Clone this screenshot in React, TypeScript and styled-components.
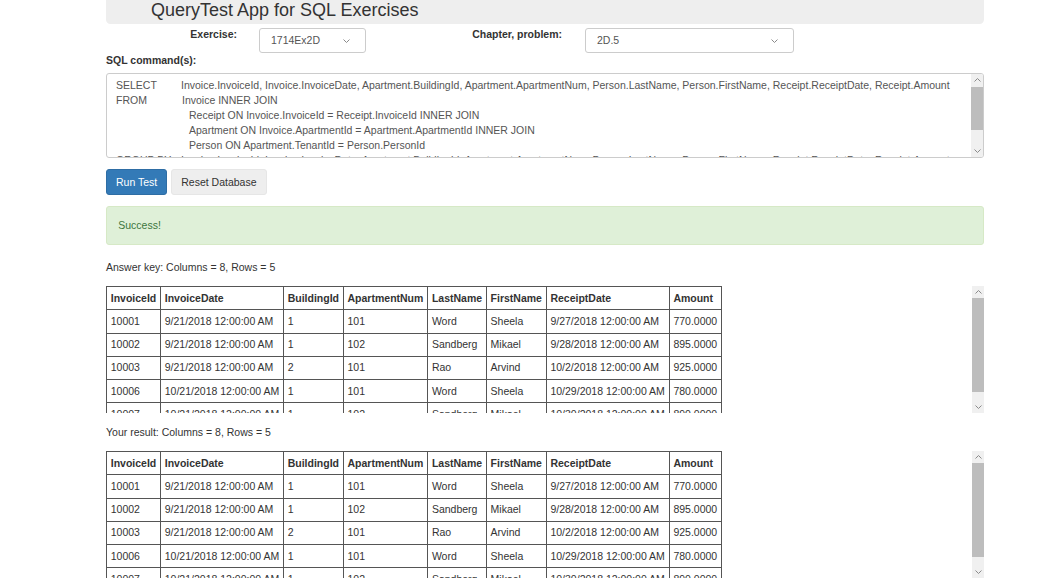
import React from "react";
import styled, { createGlobalStyle } from "styled-components";

const GlobalStyle = createGlobalStyle`
    html, body {
        margin: 0;
        padding: 0;
        background: #ffffff;
    }
    body {
        font-family: "Liberation Sans", Arial, sans-serif;
        font-size: 10.5px;
        line-height: 15px;
        color: #333333;
    }
`;

const Page = styled.main`
    width: 878px;
    margin-left: 106px;
`;

const Header = styled.header`
    background: #eeeeee;
    border-radius: 0 0 4.5px 4.5px;
    padding: 0 45px 4px;
`;

const Title = styled.h3`
    margin: 0;
    font-size: 18px;
    line-height: 20px;
    font-weight: normal;
    color: #333333;
`;

const FormRow = styled.div`
    display: flex;
    align-items: flex-start;
    margin-top: 3px;
`;

const Label = styled.label<{ $width: number }>`
    width: ${(p) => p.$width}px;
    text-align: right;
    font-weight: bold;
`;

const Select = styled.div<{ $width: number; $gap: number }>`
    width: ${(p) => p.$width}px;
    height: 25px;
    box-sizing: border-box;
    margin: 1px 0 0 ${(p) => p.$gap}px;
    padding: 0 15px 0 11px;
    border: 1px solid #cccccc;
    border-radius: 3px;
    display: flex;
    align-items: center;
    justify-content: space-between;
    color: #555555;
`;

const SectionLabel = styled.div`
    font-weight: bold;
`;

const TextBox = styled.div`
    margin-top: 4.5px;
    height: 85px;
    box-sizing: border-box;
    border: 1px solid #cccccc;
    border-radius: 3px;
    display: flex;
    overflow: hidden;
`;

const SqlText = styled.div`
    flex: 1;
    padding: 4.5px 9px;
    overflow: hidden;
    color: #555555;
    white-space: nowrap;
`;

const SqlLine = styled.div`
    display: flex;
`;

const Keyword = styled.span`
    width: 65px;
    flex: none;
`;

const Indent = styled.span<{ $width: number }>`
    width: ${(p) => p.$width}px;
    flex: none;
`;

const Bar = styled.div`
    width: 12px;
    flex: none;
    display: flex;
    flex-direction: column;
    background: #f0f0f0;
`;

const Arrow = styled.div`
    height: 12px;
    display: flex;
    align-items: center;
    justify-content: center;
    flex: none;
`;

const Track = styled.div`
    flex: 1;
`;

const Thumb = styled.div`
    background: #bdbdbd;
`;

const ButtonRow = styled.div`
    display: flex;
    gap: 4px;
    margin-top: 11px;
`;

const Button = styled.button<{ $primary?: boolean }>`
    height: 26px;
    padding: 0 9px;
    font-family: inherit;
    font-size: 10.5px;
    border-radius: 3px;
    border: 1px solid ${(p) => (p.$primary ? "#2e6da4" : "#e6e6e6")};
    background: ${(p) => (p.$primary ? "#337ab7" : "#eeeeee")};
    color: ${(p) => (p.$primary ? "#ffffff" : "#333333")};
`;

const Alert = styled.div`
    margin-top: 11px;
    padding: 11px 11.25px;
    border: 1px solid #d6e9c6;
    border-radius: 3px;
    background: #dff0d8;
    color: #3c763d;
`;

const Caption = styled.div<{ $top: number }>`
    margin-top: ${(p) => p.$top}px;
`;

const TableWrap = styled.div`
    margin-top: 11.5px;
    height: 127px;
    display: flex;
    overflow: hidden;
`;

const TableArea = styled.div`
    flex: 1;
    overflow: hidden;
`;

const Table = styled.table`
    border-collapse: collapse;
    white-space: nowrap;
`;

const Th = styled.th`
    border: 1px solid #555555;
    padding: 3.625px 3.75px;
    text-align: left;
    font-weight: bold;
`;

const Td = styled.td`
    border: 1px solid #555555;
    padding: 3.625px 3.75px;
`;

const Chevron = ({ up }: { up?: boolean }) => (
    <svg width="7" height="4" viewBox="0 0 7 4">
        <path
            d={up ? "M0.5 3.5 L3.5 0.5 L6.5 3.5" : "M0.5 0.5 L3.5 3.5 L6.5 0.5"}
            fill="none"
            stroke="#8a8a8a"
            strokeWidth="1"
        />
    </svg>
);

function Scrollbar({ offset, size }: { offset: number; size: number }) {
    return (
        <Bar>
            <Arrow><Chevron up /></Arrow>
            <Track>
                <Thumb style={{ marginTop: offset, height: size }} />
            </Track>
            <Arrow><Chevron /></Arrow>
        </Bar>
    );
}

const columns = ["InvoiceId", "InvoiceDate", "BuildingId", "ApartmentNum", "LastName", "FirstName", "ReceiptDate", "Amount"];

const rows = [
    ["10001", "9/21/2018 12:00:00 AM", "1", "101", "Word", "Sheela", "9/27/2018 12:00:00 AM", "770.0000"],
    ["10002", "9/21/2018 12:00:00 AM", "1", "102", "Sandberg", "Mikael", "9/28/2018 12:00:00 AM", "895.0000"],
    ["10003", "9/21/2018 12:00:00 AM", "2", "101", "Rao", "Arvind", "10/2/2018 12:00:00 AM", "925.0000"],
    ["10006", "10/21/2018 12:00:00 AM", "1", "101", "Word", "Sheela", "10/29/2018 12:00:00 AM", "780.0000"],
    ["10007", "10/21/2018 12:00:00 AM", "1", "102", "Sandberg", "Mikael", "10/30/2018 12:00:00 AM", "890.0000"],
];

const fields = "Invoice.InvoiceId, Invoice.InvoiceDate, Apartment.BuildingId, Apartment.ApartmentNum, Person.LastName, Person.FirstName, Receipt.ReceiptDate, Receipt.Amount";

function ResultTable() {
    return (
        <TableWrap>
            <TableArea>
                <Table>
                    <thead>
                        <tr>
                            {columns.map((c) => <Th key={c}>{c}</Th>)}
                        </tr>
                    </thead>
                    <tbody>
                        {rows.map((r) => (
                            <tr key={r[0]}>
                                {r.map((v, i) => <Td key={i}>{v}</Td>)}
                            </tr>
                        ))}
                    </tbody>
                </Table>
            </TableArea>
            <Scrollbar offset={0} size={94} />
        </TableWrap>
    );
}

export default function App() {
    return (
        <>
            <GlobalStyle />
            <Page>
                <Header>
                    <Title>QueryTest App for SQL Exercises</Title>
                </Header>
                <FormRow>
                    <Label $width={131}>Exercise:</Label>
                    <Select $width={107} $gap={22}>
                        <span>1714Ex2D</span>
                        <Chevron />
                    </Select>
                    <Label $width={196}>Chapter, problem:</Label>
                    <Select $width={209} $gap={23}>
                        <span>2D.5</span>
                        <Chevron />
                    </Select>
                </FormRow>
                <SectionLabel>SQL command(s):</SectionLabel>
                <TextBox>
                    <SqlText>
                        <SqlLine><Keyword>SELECT</Keyword><span>{fields}</span></SqlLine>
                        <SqlLine><Keyword>FROM</Keyword><Indent $width={1} /><span>Invoice INNER JOIN</span></SqlLine>
                        <SqlLine><Indent $width={73} /><span>Receipt ON Invoice.InvoiceId = Receipt.InvoiceId INNER JOIN</span></SqlLine>
                        <SqlLine><Indent $width={73} /><span>Apartment ON Invoice.ApartmentId = Apartment.ApartmentId INNER JOIN</span></SqlLine>
                        <SqlLine><Indent $width={73} /><span>Person ON Apartment.TenantId = Person.PersonId</span></SqlLine>
                        <SqlLine><Keyword>GROUP BY</Keyword><span>{fields}</span></SqlLine>
                    </SqlText>
                    <Scrollbar offset={1} size={43} />
                </TextBox>
                <ButtonRow>
                    <Button $primary>Run Test</Button>
                    <Button>Reset Database</Button>
                </ButtonRow>
                <Alert>Success!</Alert>
                <Caption $top={15}>Answer key: Columns = 8, Rows = 5</Caption>
                <ResultTable />
                <Caption $top={11.5}>Your result: Columns = 8, Rows = 5</Caption>
                <ResultTable />
            </Page>
        </>
    );
}
